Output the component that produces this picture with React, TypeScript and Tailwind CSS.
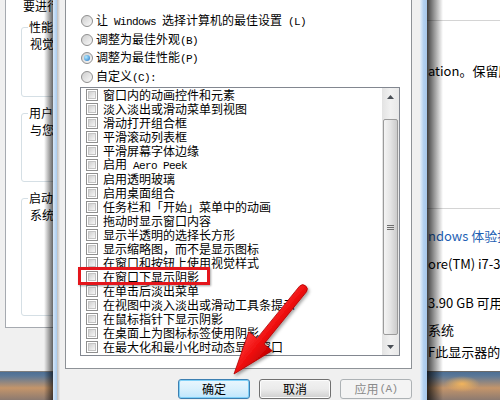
import React from 'react';

const cjk = "font-['Noto_Sans_CJK_SC',sans-serif]";

const Mono: React.FC<{ children: React.ReactNode }> = ({ children }) => (
  <span className="font-['Liberation_Mono',monospace] text-[11px] tracking-[-0.6px]">{children}</span>
);

const CheckBox = () => (
  <span className="flex w-[12px] h-[12px] shrink-0 border border-[#8f8f8f] bg-white p-px">
    <span className="flex-1 border border-[#c4c4c4] bg-linear-to-br from-[#cfcfcf] to-[#f7f7f7]" />
  </span>
);

const Radio: React.FC<{ on?: boolean }> = ({ on }) => (
  <span className="flex w-[12px] h-[12px] shrink-0 items-center justify-center rounded-full border border-[#8f8f8f] bg-linear-to-br from-[#cdcdcd] to-[#fafafa]">
    {on && <span className="w-[6px] h-[6px] rounded-full bg-[radial-gradient(circle_at_35%_35%,#b4ecff,#1b6fc6)]" />}
  </span>
);

const items: React.ReactNode[] = [
  '窗口内的动画控件和元素',
  '淡入淡出或滑动菜单到视图',
  '滑动打开组合框',
  '平滑滚动列表框',
  '平滑屏幕字体边缘',
  <>启用<Mono> Aero Peek</Mono></>,
  '启用透明玻璃',
  '启用桌面组合',
  '任务栏和「开始」菜单中的动画',
  '拖动时显示窗口内容',
  '显示半透明的选择长方形',
  '显示缩略图，而不是显示图标',
  '在窗口和按钮上使用视觉样式',
  '在窗口下显示阴影',
  '在单击后淡出菜单',
  '在视图中淡入淡出或滑动工具条提示',
  '在鼠标指针下显示阴影',
  '在桌面上为图标标签使用阴影',
  '在最大化和最小化时动态显示窗口',
];

const radios: { label: React.ReactNode; on?: boolean }[] = [
  { label: <>让<Mono> Windows </Mono>选择计算机的最佳设置<Mono> (L)</Mono></> },
  { label: <>调整为最佳外观<Mono>(B)</Mono></> },
  { label: <>调整为最佳性能<Mono>(P)</Mono></>, on: true },
  { label: <>自定义<Mono>(C):</Mono></> },
];

const ScrollBar = () => (
  <div className="flex flex-col w-[17px] shrink-0 bg-linear-to-r from-[#e3e3e3] via-[#f1f1f1] to-[#e8e8e8]">
    <div className="h-[17px] flex items-center justify-center">
      <svg width="7" height="4" viewBox="0 0 7 4"><polygon points="0,4 3.5,0 7,4" fill="#4a4f56" /></svg>
    </div>
    <div className="flex-1 flex flex-col pt-[14px] pb-[3px] px-px">
      <div className="flex-1 rounded-[2px] border border-[#9b9b9b] bg-linear-to-r from-[#f4f4f4] via-[#e4e4e4] to-[#cbcbcb] flex items-center justify-center">
        <svg width="7" height="7" viewBox="0 0 7 7">
          <path d="M0 1.5H7M0 3.5H7M0 5.5H7" stroke="#6e6e6e" strokeWidth="1" />
        </svg>
      </div>
    </div>
    <div className="h-[17px] flex items-center justify-center">
      <svg width="7" height="4" viewBox="0 0 7 4"><polygon points="0,0 3.5,4 7,0" fill="#4a4f56" /></svg>
    </div>
  </div>
);

const LeftWindow = () => (
  <div className="absolute left-0 top-0 w-[60px] h-[372px] bg-[#f0f0f0] border-b border-[#7d7d7d] overflow-hidden">
    <div className={`ml-[5px] h-[328px] w-[200px] flex flex-col bg-white border-l border-b border-[#a6aab0] ${cjk} text-[12px] leading-[16px] text-black whitespace-nowrap`}>
      <div className="-mt-[2px] pl-[17px]">要进行大多数更改，你必须作为管理员登录。</div>
      <fieldset className="mt-[5px] ml-[15px] h-[78px] border border-[#d5dfe5] rounded-[3px]">
        <legend className="ml-[6px] px-px">性能</legend>
        <div className="mt-px pl-[8px]">视觉效果，处理器计划，内存使用</div>
      </fieldset>
      <fieldset className="mt-[8px] ml-[15px] h-[77px] border border-[#d5dfe5] rounded-[3px]">
        <legend className="ml-[6px] px-px">用户配置文件</legend>
        <div className="mt-px pl-[8px]">与您登录有关的桌面设置</div>
      </fieldset>
      <fieldset className="mt-[8px] ml-[15px] h-[126px] border border-[#d5dfe5] rounded-[3px]">
        <legend className="ml-[6px] px-px">启动和故障恢复</legend>
        <div className="mt-px pl-[8px]">系统启动、系统失败和调试信息</div>
      </fieldset>
    </div>
  </div>
);

const RightWindow = () => (
  <div className={`absolute left-[427px] top-0 w-[73px] h-[372px] bg-white border-b border-[#6a6a6a] overflow-hidden flex flex-col ${cjk} text-[13px] leading-[16px] text-black whitespace-nowrap`}>
    <div className="mt-[20px] h-px bg-[#d4d4d4] shrink-0" />
    <div className="mt-[42px] pl-px">ation。保留所有权利。</div>
    <div className="mt-[129px] h-px bg-[#d4d4d4] shrink-0" />
    <div className="mt-[19px] pl-px text-[#1e5fb4]">ndows 体验指数</div>
    <div className="mt-[12px] pl-px">ore(TM) i7-3770</div>
    <div className="mt-[23px] pl-px">3.90 GB 可用)</div>
    <div className="mt-[11px] pl-px">系统</div>
    <div className="mt-[6px] pl-px">F此显示器的笔</div>
  </div>
);

const Btn: React.FC<{ children: React.ReactNode; kind?: 'default' | 'normal' | 'disabled' }> = ({ children, kind = 'normal' }) => {
  const cls =
    kind === 'default'
      ? 'border-[#3c7fb1] bg-linear-to-b from-[#eaf6fd] via-[#d9f0fc] to-[#bee6fd] shadow-[inset_0_0_0_1px_#7fd0f7] text-black'
      : kind === 'disabled'
      ? 'border-[#adb2b5] bg-[#f4f4f4] text-[#8a8a8a]'
      : 'border-[#707070] bg-linear-to-b from-[#f2f2f2] via-[#ebebeb] to-[#cfcfcf] shadow-[inset_0_0_0_1px_#fcfcfc] text-black';
  return (
    <div className={`w-[72px] h-[20px] rounded-[3px] border flex items-center justify-center text-[12px] leading-[14px] ${cls}`}>
      {children}
    </div>
  );
};

const Dialog = () => (
  <div className="absolute left-[53px] top-0 w-[374px] h-[400px] flex">
    <div className="w-[7px] flex shrink-0">
      <span className="w-[4px] bg-linear-to-r from-[#d8e8f8] to-[#a9cbee]" />
      <span className="w-[3px] bg-linear-to-r from-[#bcbcbc] to-[#ececec]" />
    </div>
    <div className={`flex-1 flex flex-col bg-[#f0f0f0] pl-[5px] pr-[8px] ${cjk} text-black`}>
      <div className="h-[369px] shrink-0 bg-white border-l border-r border-b border-[#8e9297] flex flex-col text-[12px] leading-[14px] whitespace-nowrap">
        <div className="pt-[12px] pl-[15px] flex flex-col">
          {radios.map((r, i) => (
            <div key={i} className="h-[18.5px] flex items-center gap-[3px]">
              <Radio on={r.on} />
              <span>{r.label}</span>
            </div>
          ))}
        </div>
        <div className="mt-px ml-[14px] w-[320px] h-[269px] border border-[#828790] flex">
          <div className="flex-1 flex flex-col">
            {items.map((t, i) => (
              <div key={i} className="h-[14px] flex items-center gap-[5px] pl-[5px]">
                <CheckBox />
                <span>{t}</span>
              </div>
            ))}
          </div>
          <ScrollBar />
        </div>
      </div>
      <div className="mt-[10px] flex justify-end gap-[9px]">
        <Btn kind="default">确定</Btn>
        <Btn>取消</Btn>
        <Btn kind="disabled">
          应用<span className="font-['Liberation_Mono',monospace] text-[11px] tracking-[-0.6px] ml-px">(A)</span>
        </Btn>
      </div>
    </div>
    <div className="w-[7px] shrink-0 bg-linear-to-r from-[#e6f0fa] via-[#b4d2f1] to-[#a7c7ea]" />
  </div>
);

export default function App() {
  return (
    <div className="relative w-[500px] h-[400px] overflow-hidden bg-[radial-gradient(ellipse_18px_8px_at_462px_384px,#f2b45c,transparent),linear-gradient(180deg,#3f6690_0%,#3f6690_92%,#5b7898_94%,#c4956a_97%,#8c7a70_100%)]">
      <LeftWindow />
      <RightWindow />
      <div className="absolute left-[44px] top-0 w-[9px] h-[400px] bg-linear-to-r from-transparent to-[rgba(0,0,0,0.6)]" />
      <div className="absolute left-[427px] top-0 w-[16px] h-[400px] bg-linear-to-r from-[rgba(0,0,0,0.75)] to-transparent" />
      <Dialog />
      <div className="absolute left-[78px] top-[267px] w-[132px] h-[18px] border-[3px] border-[#e4161c] shadow-[1px_1px_2px_rgba(0,0,0,0.35)]" />
      <svg className="absolute left-0 top-0 pointer-events-none" width="500" height="400" viewBox="0 0 500 400">
        <defs>
          <filter id="arrowShadow" x="-20%" y="-20%" width="140%" height="140%">
            <feDropShadow dx="1.5" dy="2" stdDeviation="1.5" floodColor="#000" floodOpacity="0.35" />
          </filter>
          <linearGradient id="arrowFill" gradientUnits="userSpaceOnUse" x1="249" y1="332" x2="272" y2="351">
            <stop offset="0" stopColor="#ff3a3a" />
            <stop offset="0.5" stopColor="#f01010" />
            <stop offset="1" stopColor="#c20000" />
          </linearGradient>
        </defs>
        <path
          d="M234 374 L272.2 350.7 L264 344 L306.5 291.8 A4.5 4.5 0 0 0 299.5 286.2 L257 338.4 L248.8 331.8 Z"
          fill="url(#arrowFill)"
          stroke="#b00000"
          strokeWidth="0.8"
          filter="url(#arrowShadow)"
        />
      </svg>
    </div>
  );
}
